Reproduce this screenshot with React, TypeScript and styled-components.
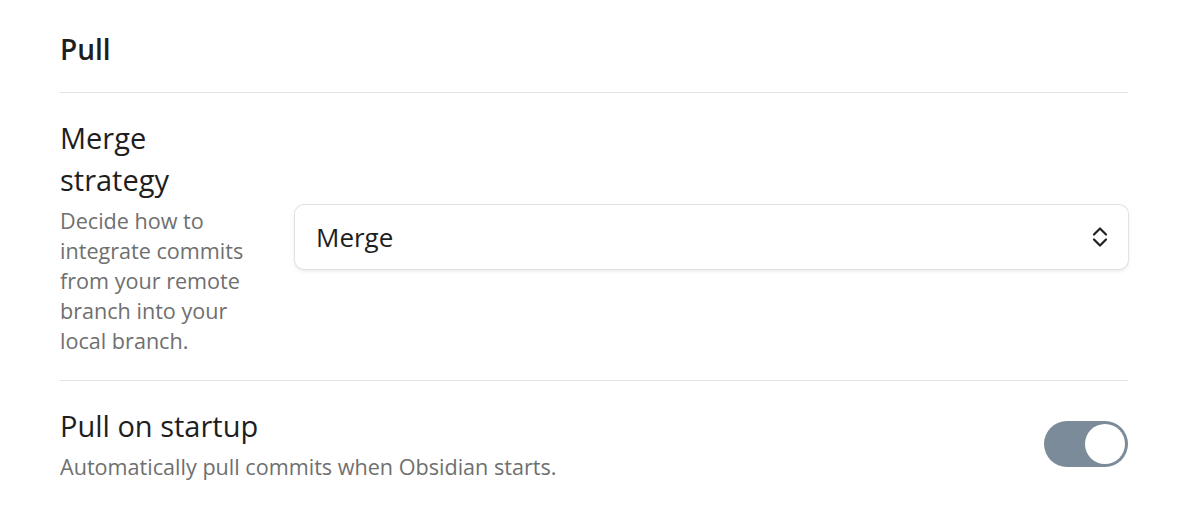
import styled, {createGlobalStyle} from "styled-components";

const GlobalStyle = createGlobalStyle`
    html, body {
        margin: 0;
        padding: 0;
        background: #ffffff;
    }
    body {
        font-family: "Open Sans", "Noto Sans", sans-serif;
        color: #222222;
    }
`;

const Page = styled.div`
    padding: 0 63px 0 60px;
`;

const Heading = styled.div`
    padding: 28px 0 22px;
    border-bottom: 1px solid #e3e3e3;
    font-size: 28px;
    font-weight: 600;
    line-height: 42px;
    color: #1e1e1e;
`;

const Item = styled.div<{ $divider?: boolean }>`
    display: flex;
    align-items: center;
    gap: 40px;
    padding: 24px 0;
    border-bottom: ${p => p.$divider ? "1px solid #e3e3e3" : "none"};
`;

const Info = styled.div<{ $narrow?: boolean }>`
    flex: ${p => p.$narrow ? "0 0 195px" : "1 1 auto"};
    display: flex;
    flex-direction: column;
    gap: 5px;
`;

const Name = styled.div`
    font-size: 29px;
    line-height: 42px;
    color: #1e1e1e;
`;

const Description = styled.div`
    font-size: 21.6px;
    line-height: 30px;
    color: #6f6f6f;
`;

const Control = styled.div<{ $grow?: boolean }>`
    flex: ${p => p.$grow ? "1 1 auto" : "0 0 auto"};
    display: flex;
    justify-content: flex-end;
`;

const Select = styled.div`
    flex: 1;
    height: 64px;
    box-sizing: border-box;
    display: flex;
    align-items: center;
    justify-content: space-between;
    padding: 0 18px 0 21px;
    border-radius: 9px;
    background: #ffffff;
    box-shadow: 0 0 0 1px #e2e2e2, 0 2px 4px rgba(0, 0, 0, 0.1);
    font-size: 26px;
    color: #1e1e1e;
`;

const Toggle = styled.div<{ $on: boolean }>`
    width: 84px;
    height: 46px;
    box-sizing: border-box;
    padding: 3px;
    border-radius: 23px;
    background: ${p => p.$on ? "#7b8b99" : "#d0d0d0"};
    display: flex;
    justify-content: ${p => p.$on ? "flex-end" : "flex-start"};
`;

const Knob = styled.div`
    width: 40px;
    height: 40px;
    border-radius: 50%;
    background: #ffffff;
`;

function UpDownIcon() {
    return (
        <svg width="20" height="24" viewBox="0 0 20 24" fill="none" stroke="#222" strokeWidth="2.2"
             strokeLinecap="round" strokeLinejoin="round">
            <path d="M4 9.5 L10 3.5 L16 9.5"/>
            <path d="M4 14.5 L10 20.5 L16 14.5"/>
        </svg>
    )
}

export default function App() {
    return <>
        <GlobalStyle/>
        <Page>
            <Heading>Pull</Heading>

            <Item $divider>
                <Info $narrow>
                    <Name>Merge strategy</Name>
                    <Description>Decide how to integrate commits from your remote branch into your local branch.</Description>
                </Info>
                <Control $grow>
                    <Select>
                        <span>Merge</span>
                        <UpDownIcon/>
                    </Select>
                </Control>
            </Item>

            <Item>
                <Info>
                    <Name>Pull on startup</Name>
                    <Description>Automatically pull commits when Obsidian starts.</Description>
                </Info>
                <Control>
                    <Toggle $on>
                        <Knob/>
                    </Toggle>
                </Control>
            </Item>
        </Page>
    </>
}
